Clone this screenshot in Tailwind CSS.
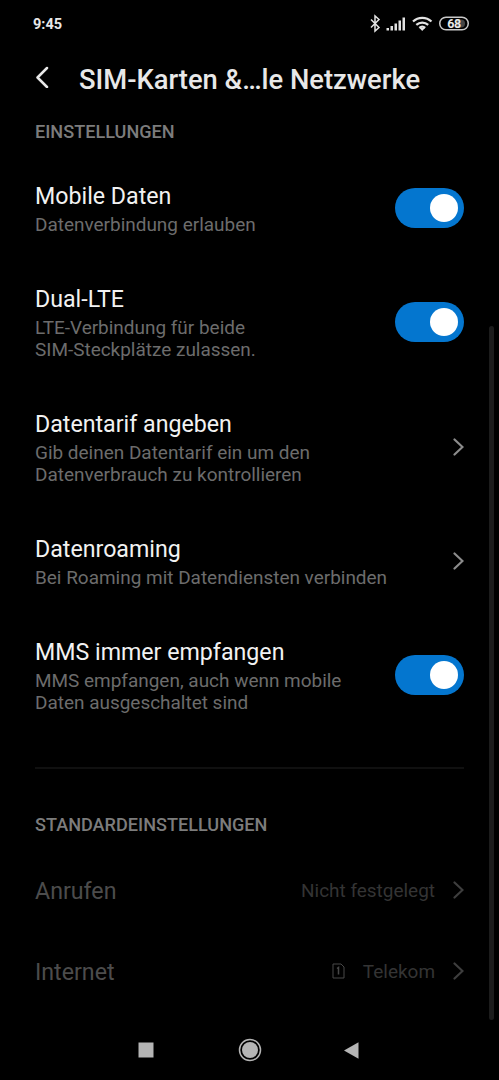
<!DOCTYPE html>
<html lang="de">
<head>
    <meta charset="UTF-8">
    <meta name="viewport" content="width=device-width, initial-scale=1.0">
    <title>SIM-Karten &amp; mobile Netzwerke</title>

    <script src="https://cdn.jsdelivr.net/npm/@tailwindcss/browser@4"></script>

    <style>
        body {
            background-color: #000;
            font-family: Roboto, sans-serif;
        }
    </style>
</head>
<body class="relative flex flex-col h-[1080px] overflow-hidden text-[#f2f2f2]">
    <!-- Status bar -->
    <div class="flex items-center justify-between h-12 pl-[33px] pr-[29px]">
        <span class="pt-0.5 text-[14.5px] font-bold text-[#e8e8e8]">9:45</span>
        <svg width="100" height="20" viewBox="0 0 100 20" fill="none">
            <path d="M1 5.500L9 13.500L5 17V2L9 5.500L1 13.500" stroke="#e2e2e2" stroke-width="1.500"/>
            <g fill="#e2e2e2">
                <rect x="16.500" y="14" width="2.500" height="2.500"/>
                <rect x="20.500" y="12" width="2.500" height="4.500"/>
                <rect x="24.500" y="9.500" width="2.500" height="7"/>
                <rect x="28.500" y="6.500" width="2.500" height="10"/>
                <rect x="32.500" y="3.500" width="2.500" height="13"/>
            </g>
            <g stroke="#e2e2e2" stroke-width="2.200">
                <path d="M43 7.500a13.500 13.500 0 0 1 18.500 0"/>
                <path d="M46.300 10.800a9 9 0 0 1 11.900 0"/>
                <path d="M49.300 13.800a4.500 4.500 0 0 1 5.900 0"/>
            </g>
            <path d="M49.500 14L52.200 17L55 14z" fill="#e2e2e2"/>
            <rect x="69.750" y="3.250" width="28.500" height="12.500" rx="6.250" stroke="#c9c9c9" stroke-width="1.500"/>
            <path d="M87 5.500h4a4 4 0 0 1 0 8h-4z" fill="#444"/>
            <text x="84" y="14" text-anchor="middle" font-size="12.500" font-weight="700" fill="#e8e8e8" letter-spacing="-0.500">68</text>
        </svg>
    </div>

    <!-- Title bar -->
    <div class="flex items-center h-[62px] pl-[35px]">
        <svg width="14" height="22" viewBox="0 0 14 22" fill="none" class="-mt-1 mr-[30px]"><path d="M12 2L2.500 11.500L12 21" stroke="#e8e8e8" stroke-width="2.500" stroke-linecap="round" stroke-linejoin="round"/></svg>
        <h1 class="pt-1 text-[27.35px] font-medium text-[#e8e8e8] whitespace-nowrap">SIM-Karten &amp;…le Netzwerke</h1>
    </div>

    <!-- Settings -->
    <div class="flex flex-col pl-[35px] pr-[35px]">
        <h2 class="h-12 pt-[10px] text-[18.1px] leading-6 font-medium text-[#7c7c7c]">EINSTELLUNGEN</h2>

        <div class="flex items-center justify-between h-[102px]">
            <div>
                <div class="text-[23.2px] leading-7">Mobile Daten</div>
                <div class="mt-1 text-[18.97px] leading-[22px] text-[#6c6c6c]">Datenverbindung erlauben</div>
            </div>
            <div class="flex justify-end items-center w-[69px] h-10 -mt-0.5 pr-1.5 rounded-full bg-[#0476cf]"><div class="size-7 rounded-full bg-white"></div></div>
        </div>

        <div class="flex items-center justify-between h-[125px]">
            <div>
                <div class="text-[23.2px] leading-7">Dual-LTE</div>
                <div class="mt-1 text-[18.97px] leading-[22px] text-[#6c6c6c]">LTE-Verbindung für beide<br>SIM-Steckplätze zulassen.</div>
            </div>
            <div class="flex justify-end items-center w-[69px] h-10 -mt-0.5 pr-1.5 rounded-full bg-[#0476cf]"><div class="size-7 rounded-full bg-white"></div></div>
        </div>

        <div class="flex items-center justify-between h-[125px]">
            <div>
                <div class="text-[23.2px] leading-7">Datentarif angeben</div>
                <div class="mt-1 text-[18.97px] leading-[22px] text-[#6c6c6c]">Gib deinen Datentarif ein um den<br>Datenverbrauch zu kontrollieren</div>
            </div>
            <svg width="11" height="18" viewBox="0 0 11 18" fill="none" class="-mt-0.5"><path d="M1.500 1.500L9.500 9L1.500 16.500" stroke="#8c8c8c" stroke-width="2.200" stroke-linecap="round"/></svg>
        </div>

        <div class="flex items-center justify-between h-[103px]">
            <div>
                <div class="text-[23.2px] leading-7">Datenroaming</div>
                <div class="mt-1 text-[18.97px] leading-[22px] text-[#6c6c6c] whitespace-nowrap">Bei Roaming mit Datendiensten verbinden</div>
            </div>
            <svg width="11" height="18" viewBox="0 0 11 18" fill="none" class="-mt-0.5"><path d="M1.500 1.500L9.500 9L1.500 16.500" stroke="#8c8c8c" stroke-width="2.200" stroke-linecap="round"/></svg>
        </div>

        <div class="flex items-center justify-between h-[125px]">
            <div>
                <div class="text-[23.2px] leading-7">MMS immer empfangen</div>
                <div class="mt-1 text-[18.97px] leading-[22px] text-[#6c6c6c]">MMS empfangen, auch wenn mobile<br>Daten ausgeschaltet sind</div>
            </div>
            <div class="flex justify-end items-center w-[69px] h-10 -mt-0.5 pr-1.5 rounded-full bg-[#0476cf]"><div class="size-7 rounded-full bg-white"></div></div>
        </div>
    </div>

    <!-- Default settings -->
    <div class="flex flex-col mt-[29px] mx-[35px] border-t-2 border-[#101010]">
        <h2 class="h-[81px] pt-[44px] text-[18.1px] leading-6 font-medium text-[#7c7c7c]">STANDARDEINSTELLUNGEN</h2>

        <div class="flex items-center h-[81px]">
            <span class="text-[23.2px] leading-[30px] text-[#4c4c4c]">Anrufen</span>
            <span class="ml-auto mr-[18px] pt-px text-[18.95px] text-[#343434]">Nicht festgelegt</span>
            <svg width="11" height="18" viewBox="0 0 11 18" fill="none" class="-mt-0.5"><path d="M1.500 1.500L9.500 9L1.500 16.500" stroke="#3e3e3e" stroke-width="2.200" stroke-linecap="round"/></svg>
        </div>

        <div class="flex items-center h-[81px]">
            <span class="text-[23.2px] leading-[30px] text-[#4c4c4c]">Internet</span>
            <svg width="13" height="16" viewBox="0 0 13 16" fill="none" class="-mt-0.5 ml-auto mr-[18px]" stroke="#484848"><path d="M1 1h8l3 3v11H1z"/><path d="M5 5.500l1.500-1V11.500" stroke-width="1.500"/></svg>
            <span class="mr-[18px] pt-px text-[18.95px] text-[#343434]">Telekom</span>
            <svg width="11" height="18" viewBox="0 0 11 18" fill="none" class="-mt-0.5"><path d="M1.500 1.500L9.500 9L1.500 16.500" stroke="#3e3e3e" stroke-width="2.200" stroke-linecap="round"/></svg>
        </div>
    </div>

    <!-- Scrollbar -->
    <div class="absolute left-[489px] top-[326px] w-[5px] h-[694px] rounded-full bg-[#1c1c1c]"></div>

    <!-- Navigation bar -->
    <div class="flex items-center h-[60px] mt-auto pl-[138px]">
        <svg width="16" height="16" viewBox="0 0 16 16"><path d="M0.500 0.500h15v15h-15z" fill="#b5b5b5"/></svg>
        <svg width="24" height="24" viewBox="0 0 24 24" class="ml-[84px]"><circle cx="12" cy="12" r="10.500" fill="none" stroke="#b5b5b5" stroke-width="1.500"/><circle cx="12" cy="12" r="8" fill="#b5b5b5"/></svg>
        <svg width="15" height="17" viewBox="0 0 15 17" class="ml-[82px]"><path d="M0 8.500L14.500 0.300V16.700z" fill="#b5b5b5"/></svg>
    </div>
</body>
</html>
